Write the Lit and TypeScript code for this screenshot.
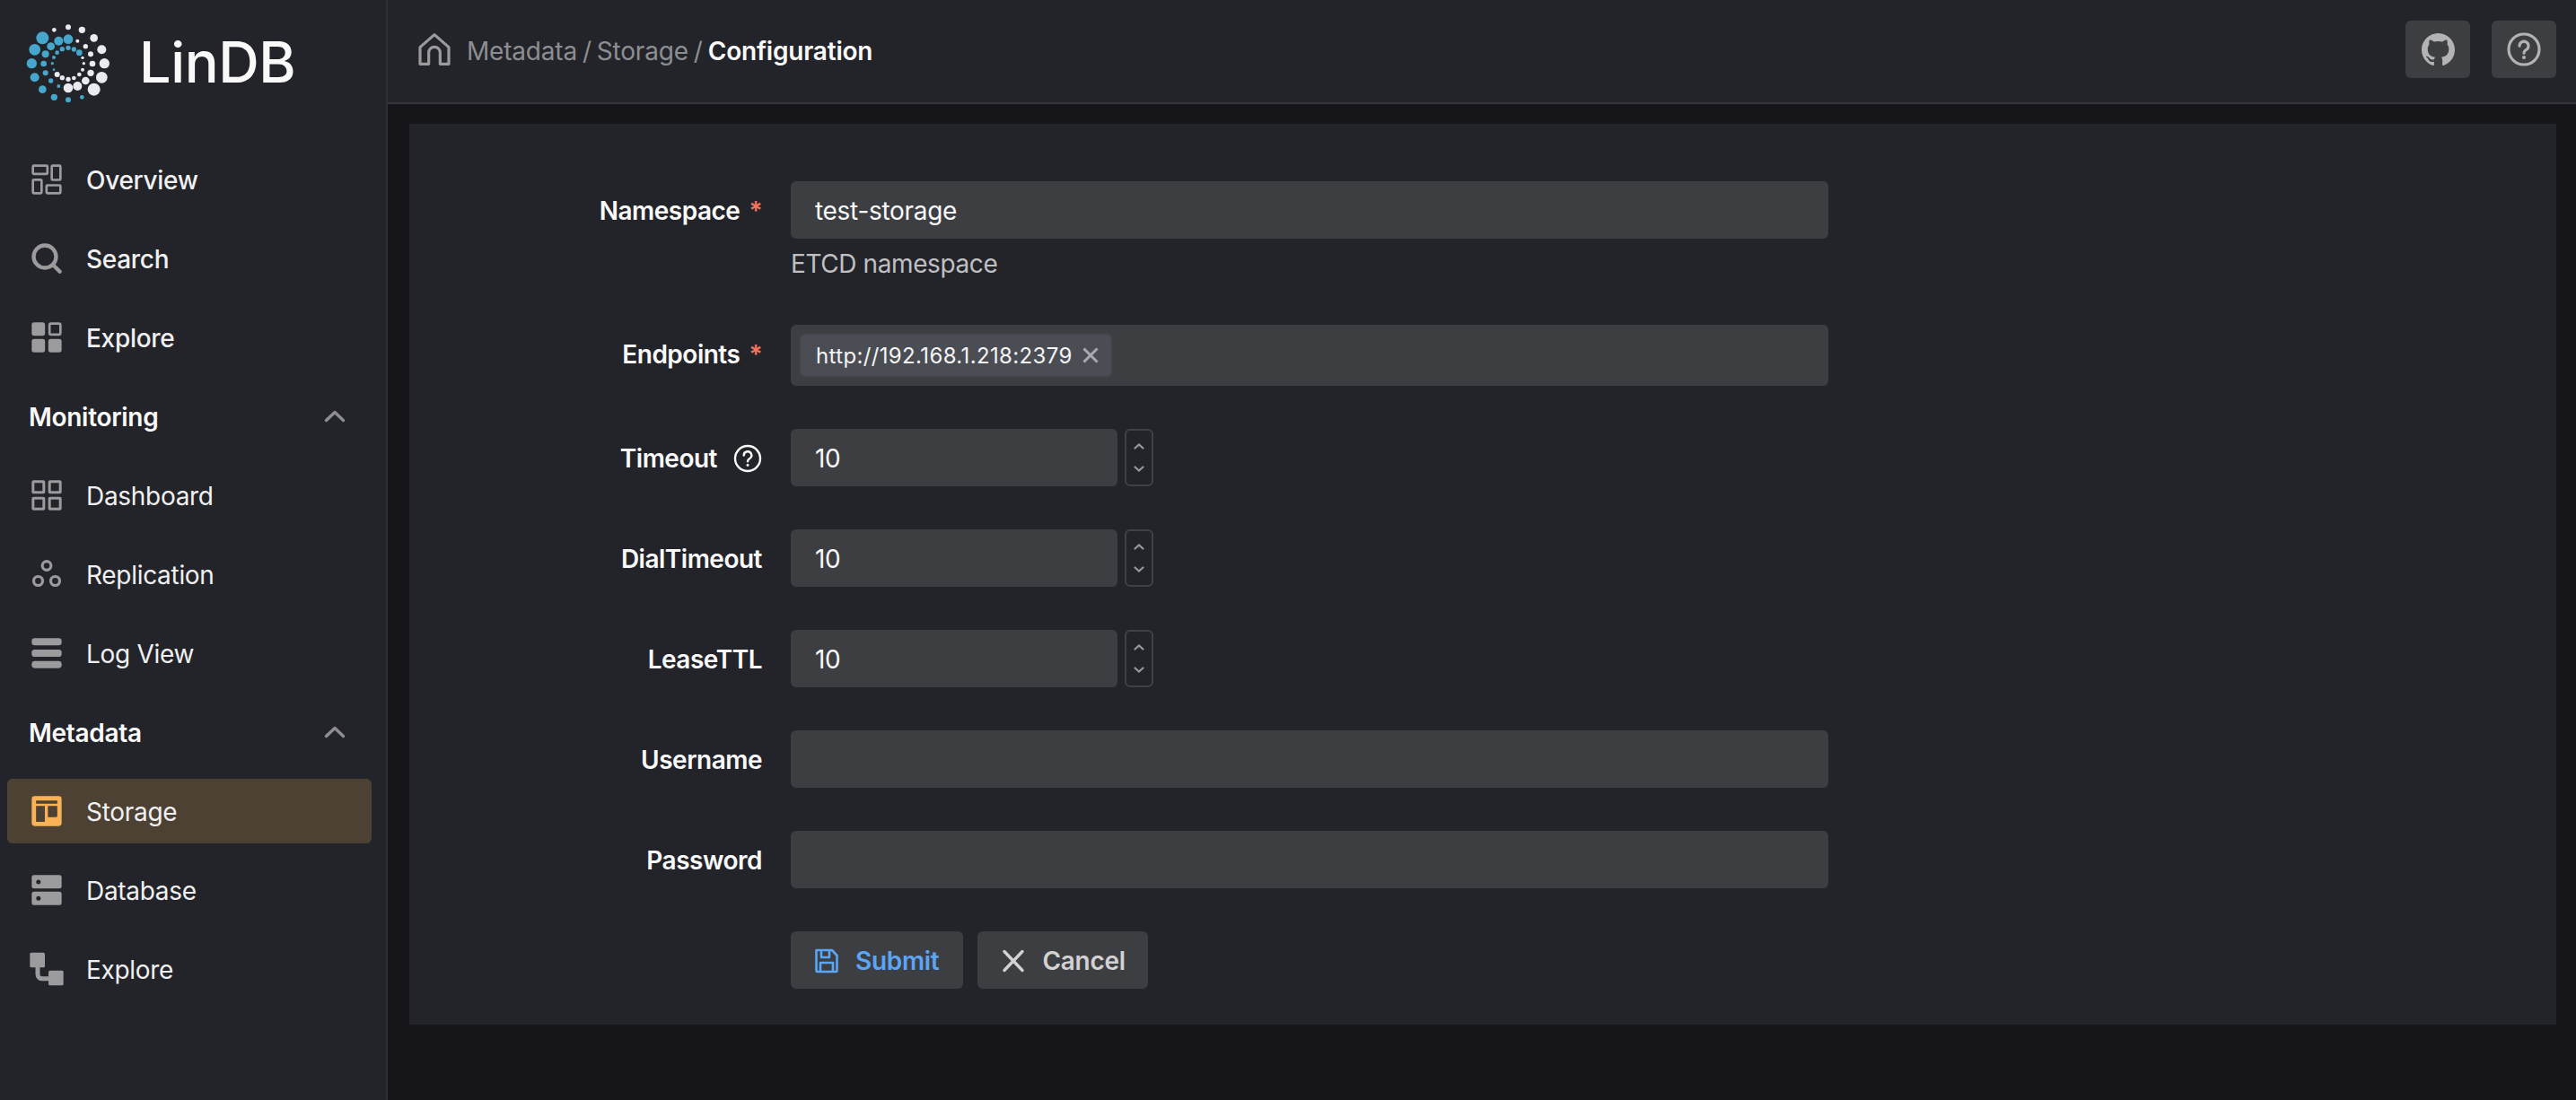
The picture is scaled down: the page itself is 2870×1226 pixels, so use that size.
import { LitElement, html, svg, css } from 'lit';
import { customElement } from 'lit/decorators.js';

const BLUE = '#46a7cc';
const WHITE = '#e9ebef';

// logo dots as x, y, r on a 360x330 grid
const blueDots = [
  [82, 88, 21], [136, 98, 15], [168, 92, 16], [56, 127, 19], [110, 116, 13], [46, 173, 17], [92, 142, 12],
  [86, 174, 10], [56, 220, 15], [92, 205, 9], [82, 260, 13], [110, 231, 8], [136, 249, 6], [121, 286, 11],
  [168, 295, 9], [214, 286, 7], [148, 125, 8], [168, 121, 8], [187, 126, 8], [205, 137, 10], [131, 137, 7],
  [120, 153, 6], [115, 173, 5], [120, 194, 4],
];
const whiteDots = [
  [121, 61, 7], [168, 52, 9], [214, 61, 11], [254, 88, 13], [199, 98, 6], [226, 116, 8], [280, 127, 15],
  [243, 142, 9], [216, 154, 5], [289, 173, 17], [249, 174, 10], [220, 173, 5], [216, 194, 6], [243, 205, 11],
  [280, 220, 19], [205, 210, 7], [226, 231, 13], [254, 260, 21], [199, 249, 15], [168, 255, 16], [187, 222, 7],
  [168, 226, 8], [148, 221, 8], [131, 210, 9],
];

const icons: Record<string, unknown> = {
  overview: svg`<g fill="none" stroke="currentColor" stroke-width="1.6"><rect x="2.8" y="2.8" width="9.7" height="5.5" rx=".6"/><rect x="15.4" y="2.8" width="5.8" height="9.5" rx=".6"/><rect x="2.8" y="12.2" width="5.8" height="9" rx=".6"/><rect x="11.9" y="15.9" width="9.3" height="5.3" rx=".6"/></g>`,
  search: svg`<g fill="none" stroke="currentColor" stroke-width="2.6" stroke-linecap="round"><circle cx="10.8" cy="10.8" r="7.5"/><path d="M16.6 16.6 20.8 20.8"/></g>`,
  apps: svg`<g fill="currentColor"><rect x="2" y="2" width="8.9" height="8.9" rx="1.6"/><rect x="2" y="13.1" width="8.9" height="8.9" rx="1.6"/><rect x="13.1" y="13.1" width="8.9" height="8.9" rx="1.6"/></g><rect x="13.9" y="2.8" width="7.3" height="7.3" rx="1" fill="none" stroke="currentColor" stroke-width="1.6"/>`,
  dashboard: svg`<g fill="none" stroke="currentColor" stroke-width="1.8"><rect x="2.9" y="2.9" width="7.2" height="7.2" rx=".3"/><rect x="13.9" y="2.9" width="7.2" height="7.2" rx=".3"/><rect x="2.9" y="13.9" width="7.2" height="7.2" rx=".3"/><rect x="13.9" y="13.9" width="7.2" height="7.2" rx=".3"/></g>`,
  replication: svg`<g fill="none" stroke="currentColor" stroke-width="1.9"><circle cx="12" cy="6.300" r="2.900"/><circle cx="6.300" cy="16.500" r="3"/><circle cx="17.700" cy="16.500" r="3"/></g>`,
  logs: svg`<g fill="currentColor"><rect x="2" y="2" width="20" height="4.800" rx="2"/><rect x="2" y="9.600" width="20" height="4.800" rx="2"/><rect x="2" y="17.200" width="20" height="4.800" rx="2"/></g>`,
  storage: svg`<path fill="currentColor" fill-rule="evenodd" d="M4 2h16a2 2 0 0 1 2 2v16a2 2 0 0 1-2 2H4a2 2 0 0 1-2-2V4a2 2 0 0 1 2-2Zm.9 3v2h14.200V5H4.900Zm0 3.600V19.200h5.900V8.600H4.900Zm7.900 0V16h5.600a.7.7 0 0 0 .7-.7V8.600h-6.300Z"/>`,
  database: svg`<path fill="currentColor" fill-rule="evenodd" d="M3.500 2h17A1.500 1.500 0 0 1 22 3.500v6a1.500 1.500 0 0 1-1.500 1.500h-17A1.500 1.500 0 0 1 2 9.500v-6A1.500 1.500 0 0 1 3.500 2Zm3 3.100a1.500 1.500 0 1 0 0 3 1.500 1.500 0 0 0 0-3ZM3.500 13h17a1.500 1.500 0 0 1 1.500 1.500v6a1.500 1.500 0 0 1-1.500 1.500h-17A1.500 1.500 0 0 1 2 20.500v-6A1.500 1.500 0 0 1 3.500 13Zm3 3.100a1.500 1.500 0 1 0 0 3 1.500 1.500 0 0 0 0-3Z"/>`,
  flow: svg`<g fill="currentColor"><rect x=".8" y="1" width="10" height="10" rx="1"/><rect x="13.200" y="13" width="10" height="10" rx="1"/></g><path d="M6 10v5.500a3 3 0 0 0 3 3h5.500" fill="none" stroke="currentColor" stroke-width="3"/>`,
};

type NavItem = { label: string; icon: string; strong?: boolean; active?: boolean };

const topItems: NavItem[] = [
  { label: 'Overview', icon: 'overview', strong: true },
  { label: 'Search', icon: 'search', strong: true },
  { label: 'Explore', icon: 'apps', strong: true },
];
const sections: { title: string; items: NavItem[] }[] = [
  {
    title: 'Monitoring',
    items: [
      { label: 'Dashboard', icon: 'dashboard' },
      { label: 'Replication', icon: 'replication' },
      { label: 'Log View', icon: 'logs' },
    ],
  },
  {
    title: 'Metadata',
    items: [
      { label: 'Storage', icon: 'storage', active: true },
      { label: 'Database', icon: 'database' },
      { label: 'Explore', icon: 'flow' },
    ],
  },
];

@customElement('app-root')
export class AppRoot extends LitElement {
  static styles = css`
    :host {
      display: grid;
      grid-template-columns: 432px 1fr;
      height: 1226px;
      background: #16161a;
      color: #f9f9f9;
      font-family: Inter, 'Noto Sans', sans-serif;
      font-size: 28px;
      letter-spacing: -0.3px;
      overflow: hidden;
    }

    .sider {
      background: #232429;
      border-right: 2px solid #2f3034;
      box-sizing: border-box;
    }
    .brand {
      height: 136px;
      display: flex;
      align-items: center;
      padding-left: 20px;
      gap: 15px;
      margin-bottom: 28px;
    }
    .brand svg {
      width: 120px;
      height: 110px;
    }
    .brand span {
      font-size: 63px;
      font-weight: 500;
      color: #f9f9f9;
      letter-spacing: -0.4px;
      position: relative;
      top: 1px;
    }
    .nav {
      display: flex;
      flex-direction: column;
      gap: 16px;
      padding: 0 16px 0 8px;
    }
    .item,
    .section {
      height: 72px;
      display: flex;
      align-items: center;
      border-radius: 6px;
    }
    .item {
      padding-left: 24px;
      gap: 24px;
      color: #f0f0f1;
    }
    .item span,
    .section span {
      padding-top: 2px;
    }
    .item svg {
      width: 40px;
      height: 40px;
      color: #9b9b9e;
      flex: none;
    }
    .item.strong {
      font-weight: 500;
    }
    .item.active {
      background: #4d4133;
    }
    .item.active svg {
      color: #f8b155;
    }
    .section {
      justify-content: space-between;
      padding: 0 29px 0 24px;
      font-weight: 600;
    }
    .section svg {
      width: 24px;
      height: 14px;
      color: #8f8f92;
    }

    .main {
      display: flex;
      flex-direction: column;
      min-width: 0;
    }
    .header {
      box-sizing: border-box;
      height: 116px;
      background: #232429;
      border-bottom: 2px solid #35363a;
      display: flex;
      align-items: center;
      justify-content: space-between;
      padding: 0 22px 4px 32px;
      flex: none;
    }
    .crumbs {
      display: flex;
      align-items: center;
      color: #8d8e91;
      letter-spacing: -0.2px;
    }
    .crumbs svg {
      width: 40px;
      height: 40px;
      margin-right: 16px;
      color: #9b9b9e;
    }
    .crumbs span,
    .crumbs b,
    .crumbs i {
      padding-top: 4px;
    }
    .crumbs i {
      font-style: normal;
      margin: 0 6px;
    }
    .crumbs b {
      color: #f9f9f9;
      font-weight: 600;
    }
    .actions {
      display: flex;
      gap: 24px;
    }
    .icon-btn {
      width: 72px;
      height: 64px;
      background: #3d3e42;
      border-radius: 6px;
      display: flex;
      align-items: center;
      justify-content: center;
      color: #b3b3b5;
    }

    .card {
      background: #232429;
      margin: 22px 22px 0 24px;
      padding: 64px 0 40px;
      display: grid;
      grid-template-columns: 393px 1156px;
      column-gap: 32px;
      row-gap: 48px;
    }
    .label {
      box-sizing: border-box;
      padding-top: 2px;
      font-weight: 600;
      letter-spacing: -0.5px;
      display: flex;
      justify-content: flex-end;
      align-items: center;
      height: 64px;
    }
    .req {
      color: #f3745c;
      margin-left: 10px;
      font-weight: 600;
    }
    .tip {
      margin-left: 18px;
      width: 32px;
      height: 32px;
      flex: none;
    }
    .input {
      box-sizing: border-box;
      height: 64px;
      width: 100%;
      background: #3d3e42;
      border: 0;
      border-radius: 6px;
      padding: 2px 26px 0 27px;
      color: #f9f9f9;
      font: inherit;
      letter-spacing: inherit;
      outline: none;
      display: block;
    }
    .help {
      margin-top: 8px;
      line-height: 40px;
      color: #c0c0c2;
      letter-spacing: -0.4px;
    }
    .tags {
      box-sizing: border-box;
      height: 68px;
      background: #3d3e42;
      border-radius: 6px;
      padding: 10px;
      display: flex;
    }
    .tag {
      box-sizing: border-box;
      height: 48px;
      background: #4b4d54;
      border: 2px solid #47484d;
      border-radius: 6px;
      padding: 0 12px 0 16px;
      display: flex;
      align-items: center;
      gap: 10px;
      font-size: 24px;
      letter-spacing: 0.36px;
      color: #f4f4f5;
    }
    .tag svg {
      width: 20px;
      height: 20px;
      color: #a9aaad;
    }
    .number {
      display: flex;
      gap: 8px;
    }
    .number .input {
      width: 364px;
    }
    .spin {
      box-sizing: border-box;
      width: 32px;
      height: 64px;
      border: 2px solid #404145;
      border-radius: 6px;
      display: flex;
      flex-direction: column;
      justify-content: space-between;
      align-items: center;
      padding: 14px 0;
      color: #98999c;
    }
    .spin svg {
      width: 12px;
      height: 7px;
    }
    .buttons {
      display: flex;
      gap: 16px;
    }
    .btn {
      box-sizing: border-box;
      height: 64px;
      background: #3d3e42;
      border: 0;
      border-radius: 6px;
      padding: 2px 26px 0;
      display: flex;
      align-items: center;
      gap: 18px;
      font: inherit;
      letter-spacing: inherit;
      font-weight: 600;
    }
    .btn svg {
      width: 28px;
      height: 28px;
    }
    .btn.primary {
      color: #5ba5f5;
      padding-right: 27px;
    }
    .btn.plain {
      color: #d2d2d3;
      padding-right: 25px;
    }
  `;

  private navItem(item: NavItem) {
    const cls = `item${item.strong ? ' strong' : ''}${item.active ? ' active' : ''}`;
    return html`<div class=${cls}>
      <svg viewBox="0 0 24 24">${icons[item.icon]}</svg>
      <span>${item.label}</span>
    </div>`;
  }

  private field(label: string, control: unknown, required = false, tip = false) {
    return html`
      <div class="label">
        ${label}
        ${required ? html`<span class="req">*</span>` : ''}
        ${tip
          ? html`<svg class="tip" viewBox="0 0 24 24" fill="none" stroke="#f9f9f9" stroke-width="1.800">
              <circle cx="12" cy="12" r="10.500" />
              <path d="M8.800 9.400a3.200 3.200 0 1 1 4.700 2.800c-1 .6-1.500 1.200-1.500 2.300" stroke-linecap="round" />
              <circle cx="12" cy="17.600" r="1.100" fill="#f9f9f9" stroke="none" />
            </svg>`
          : ''}
      </div>
      <div>${control}</div>
    `;
  }

  private numberInput(value: string) {
    return html`<div class="number">
      <input class="input" .value=${value} />
      <div class="spin">
        <svg viewBox="0 0 12 7" fill="none" stroke="currentColor" stroke-width="2.200" stroke-linecap="round"><path d="M1.500 5.500 6 1.500l4.500 4" /></svg>
        <svg viewBox="0 0 12 7" fill="none" stroke="currentColor" stroke-width="2.200" stroke-linecap="round"><path d="M1.500 1.500 6 5.500l4.500-4" /></svg>
      </div>
    </div>`;
  }

  render() {
    return html`
      <aside class="sider">
        <div class="brand">
          <svg viewBox="0 0 360 330">
            ${blueDots.map(([x, y, r]) => svg`<circle cx=${x} cy=${y} r=${r} fill=${BLUE} />`)}
            ${whiteDots.map(([x, y, r]) => svg`<circle cx=${x} cy=${y} r=${r} fill=${WHITE} />`)}
          </svg>
          <span>LinDB</span>
        </div>
        <nav class="nav">
          ${topItems.map((i) => this.navItem(i))}
          ${sections.map(
            (s) => html`
              <div class="section">
                <span>${s.title}</span>
                <svg viewBox="0 0 24 14" fill="none" stroke="currentColor" stroke-width="3.400" stroke-linecap="round" stroke-linejoin="round"><path d="M2.500 11.500 12 2.500l9.500 9" /></svg>
              </div>
              ${s.items.map((i) => this.navItem(i))}
            `
          )}
        </nav>
      </aside>

      <div class="main">
        <header class="header">
          <div class="crumbs">
            <svg viewBox="0 0 24 24" fill="none" stroke="currentColor" stroke-width="1.900" stroke-linejoin="round">
              <path d="M12 2.200 21.600 10.600V21.800H15.800V14.200a3.800 3.800 0 0 0-7.600 0V21.800H2.400V10.600Z" />
            </svg>
            <span>Metadata</span><i>/</i><span>Storage</span><i>/</i><b>Configuration</b>
          </div>
          <div class="actions">
            <div class="icon-btn">
              <svg width="37" height="37" viewBox="0 0 16 16" fill="currentColor">
                <path d="M8 0C3.580 0 0 3.580 0 8c0 3.540 2.290 6.530 5.470 7.590.4.070.55-.17.55-.38 0-.19-.01-.82-.01-1.490-2.010.37-2.530-.49-2.690-.94-.09-.23-.48-.94-.82-1.130-.28-.15-.68-.52-.01-.53.63-.01 1.080.58 1.230.82.720 1.210 1.870.870 2.330.660.070-.52.280-.87.510-1.070-1.780-.2-3.640-.89-3.640-3.950 0-.87.310-1.590.820-2.150-.08-.2-.36-1.020.080-2.120 0 0 .670-.21 2.200.820.640-.18 1.320-.27 2-.27.680 0 1.360.090 2 .270 1.530-1.040 2.200-.82 2.200-.82.440 1.100.160 1.920.080 2.120.510.560.820 1.270.820 2.150 0 3.070-1.870 3.750-3.650 3.950.290.250.540.730.540 1.480 0 1.070-.01 1.930-.01 2.200 0 .210.150.460.550.380A8.013 8.013 0 0 0 16 8c0-4.420-3.580-8-8-8z" />
              </svg>
            </div>
            <div class="icon-btn">
              <svg width="40" height="40" viewBox="0 0 24 24" fill="none" stroke="currentColor" stroke-width="1.900">
                <circle cx="12" cy="12" r="10.200" />
                <path d="M9 9.700a3 3 0 1 1 4.500 2.600c-1 .6-1.500 1.100-1.500 2.200" stroke-linecap="round" />
                <circle cx="12" cy="17.400" r="1.200" fill="currentColor" stroke="none" />
              </svg>
            </div>
          </div>
        </header>

        <form class="card">
          ${this.field(
            'Namespace',
            html`<input class="input" .value=${'test-storage'} />
              <div class="help">ETCD namespace</div>`,
            true
          )}
          ${this.field(
            'Endpoints',
            html`<div class="tags">
              <div class="tag">
                <span>http://192.168.1.218:2379</span>
                <svg viewBox="0 0 20 20" fill="none" stroke="currentColor" stroke-width="3"><path d="M2.500 2.500l15 15M17.500 2.500l-15 15" /></svg>
              </div>
            </div>`,
            true
          )}
          ${this.field('Timeout', this.numberInput('10'), false, true)}
          ${this.field('DialTimeout', this.numberInput('10'))}
          ${this.field('LeaseTTL', this.numberInput('10'))}
          ${this.field('Username', html`<input class="input" />`)}
          ${this.field('Password', html`<input class="input" type="password" />`)}
          <div></div>
          <div class="buttons">
            <button type="button" class="btn primary">
              <svg viewBox="0 0 28 28" fill="none" stroke="currentColor" stroke-width="2.600" stroke-linejoin="round">
                <path d="M2.500 2H20l5.500 6v17a1 1 0 0 1-1 1h-21a1 1 0 0 1-1-1V3a1 1 0 0 1 1-1Z" />
                <path d="M8 2v8h9V2M7 26V16h14v10" />
              </svg>
              Submit
            </button>
            <button type="button" class="btn plain">
              <svg viewBox="0 0 28 28" fill="none" stroke="currentColor" stroke-width="3.400" stroke-linecap="round"><path d="M4 3.500l20 21M24 3.500l-20 21" /></svg>
              Cancel
            </button>
          </div>
        </form>
      </div>
    `;
  }
}
